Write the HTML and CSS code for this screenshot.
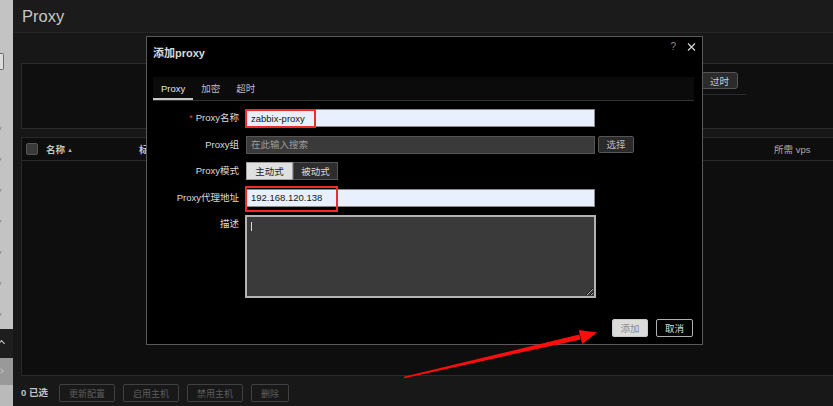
FILE: index.html
```html
<!DOCTYPE html>
<html lang="zh-CN">
<head>
<meta charset="utf-8">
<title>Proxy</title>
<link rel="stylesheet" href="styles.css">
</head>
<body>
<div class="app">
  <aside class="rail">
    <div class="rail-top">
      <span class="rail-field"></span>
      <div class="rail-ticks">
        <span class="tick"></span><span class="tick"></span><span class="tick"></span>
        <span class="tick"></span><span class="tick"></span><span class="tick"></span>
        <span class="tick"></span>
      </div>
    </div>
    <div class="rail-dark"><span class="caret-up"></span></div>
    <div class="rail-mid"><span class="caret-right"></span></div>
    <div class="rail-bottom"></div>
  </aside>

  <main class="page">
    <header class="page-head"><h1>Proxy</h1></header>
    <div class="page-body">
      <section class="filter">
        <div class="filter-tabs"><button class="filter-btn">过时</button></div>
      </section>
      <section class="table">
        <div class="thead">
          <span class="check"></span>
          <span class="th th-name">名称<i class="sort">▲</i></span>
          <span class="th th-tag">标签</span>
          <span class="th th-vps">所需 vps</span>
        </div>
      </section>
    </div>
    <footer class="page-foot">
      <span class="selected">0 已选</span>
      <button class="foot-btn">更新配置</button>
      <button class="foot-btn">启用主机</button>
      <button class="foot-btn">禁用主机</button>
      <button class="foot-btn">删除</button>
    </footer>
  </main>
</div>

<div class="dialog">
  <div class="dlg-head">
    <span class="dlg-title">添加proxy</span>
    <span class="dlg-tools">
      <span class="dlg-help">?</span>
      <svg class="dlg-close" width="9" height="8" viewBox="0 0 9 8"><path d="M1 0.5 L8 7.5 M8 0.5 L1 7.5" stroke="#d0d0d0" stroke-width="1.3" fill="none"/></svg>
    </span>
  </div>
  <nav class="dlg-tabs">
    <span class="tab tab-on">Proxy</span>
    <span class="tab">加密</span>
    <span class="tab">超时</span>
  </nav>
  <div class="dlg-form">
    <div class="row">
      <label class="lbl"><i class="req">*</i>Proxy名称</label>
      <div class="field">
        <input class="txt" value="zabbix-proxy">
        <span class="mark mark-name"></span>
      </div>
    </div>
    <div class="row">
      <label class="lbl">Proxy组</label>
      <div class="field">
        <input class="txt txt-dark" placeholder="在此输入搜索">
        <button class="pick">选择</button>
      </div>
    </div>
    <div class="row">
      <label class="lbl">Proxy模式</label>
      <div class="seg">
        <button class="seg-btn seg-on">主动式</button>
        <button class="seg-btn">被动式</button>
      </div>
    </div>
    <div class="row">
      <label class="lbl">Proxy代理地址</label>
      <div class="field">
        <input class="txt" value="192.168.120.138">
        <span class="mark mark-addr"></span>
      </div>
    </div>
    <div class="row row-memo">
      <label class="lbl">描述</label>
      <div class="field">
        <textarea class="memo"></textarea>
        <span class="text-caret"></span>
      </div>
    </div>
  </div>
  <div class="dlg-actions">
    <button class="btn-add">添加</button>
    <button class="btn-cancel">取消</button>
  </div>
</div>

<svg class="pointer" width="833" height="406" viewBox="0 0 833 406">
  <polygon points="404.2,378.2 403.8,376.8 579.4,334.6 580.6,339.4" fill="#ff0d0d"/>
  <polygon points="597,332.6 578.8,330 582.2,344" fill="#ff0d0d"/>
</svg>
</body>
</html>
```

FILE: styles.css
```css
body {
  margin: 0;
  width: 833px;
  height: 406px;
  overflow: hidden;
  position: relative;
  background: #171717;
  font-family: "Liberation Sans", "Noto Sans CJK SC", sans-serif;
  font-size: 9.5px;
  color: #ccc;
}

button, input, textarea {
  font-family: inherit;
  font-size: 9.5px;
  margin: 0;
  padding: 0;
  outline: none;
}

.app {
  display: flex;
  height: 406px;
}

/* side rail */
.rail {
  width: 13px;
  flex: none;
  display: flex;
  flex-direction: column;
}
.rail-top {
  height: 329px;
  background: #c3c3c3;
  padding-top: 53px;
  box-sizing: border-box;
}
.rail-field {
  display: block;
  width: 4px;
  height: 17px;
  box-sizing: border-box;
  border: 1px solid #6d6d6d;
  border-left: none;
  border-radius: 0 2px 2px 0;
  background: #dcdcdc;
}
.rail-ticks {
  margin-top: 56px;
  display: flex;
  flex-direction: column;
  gap: 27px;
}
.tick {
  display: block;
  width: 4px;
  height: 4px;
  margin-left: -3px;
  box-sizing: border-box;
  border-right: 1px solid #8a8a8a;
  border-bottom: 1px solid #8a8a8a;
  transform: rotate(30deg);
}
.rail-dark {
  height: 29px;
  background: #1e1e1e;
  padding-top: 12px;
  box-sizing: border-box;
}
.caret-up {
  display: block;
  width: 4px;
  height: 4px;
  margin-left: -1px;
  border-left: 1px solid #cfcfcf;
  border-top: 1px solid #cfcfcf;
  transform: rotate(45deg);
}
.rail-mid {
  height: 27px;
  background: #999;
  padding-top: 11px;
  box-sizing: border-box;
}
.caret-right {
  display: block;
  width: 3px;
  height: 3px;
  margin-left: -1px;
  border-right: 1px solid #bcbcbc;
  border-top: 1px solid #bcbcbc;
  transform: rotate(45deg);
}
.rail-bottom {
  flex: 1;
  background: #bababa;
}

/* page */
.page {
  flex: 1;
  min-width: 0;
  display: flex;
  flex-direction: column;
}
.page-head {
  height: 33px;
  box-sizing: border-box;
  background: #1b1b1b;
  border-bottom: 1px solid #262626;
  padding-left: 9px;
  display: flex;
  align-items: center;
}
.page-head h1 {
  margin: 0;
  font-size: 16.5px;
  font-weight: normal;
  color: #c6c6c6;
}
.page-body {
  flex: 1;
  display: flex;
  flex-direction: column;
  padding: 30px 0 0 8px;
  margin-right: -6px;
  background: #171717;
}
.filter {
  height: 66px;
  box-sizing: border-box;
  border: 1px solid #2b2b2b;
  background: #0f0f0f;
}
.filter-tabs {
  width: 254px;
  margin-left: 470px;
  height: 31px;
  box-sizing: border-box;
  border-bottom: 1px solid #2a2a2a;
  display: flex;
  justify-content: flex-end;
  align-items: flex-start;
  padding: 8px 8px 0 0;
}
.filter-btn {
  height: 17px;
  padding: 0 8px;
  background: #2b2b2b;
  border: 1px solid #555;
  border-radius: 3px;
  color: #cfcfcf;
}
.table {
  flex: 1;
  margin-top: 8px;
  border: 1px solid #2a2a2a;
  background: #0e0e0e;
}
.thead {
  height: 23px;
  box-sizing: border-box;
  border-bottom: 1px solid #2a2a2a;
  display: flex;
  align-items: center;
  padding-left: 4px;
}
.check {
  width: 12px;
  height: 12px;
  box-sizing: border-box;
  border: 1px solid #555;
  border-radius: 2px;
  background: #3a3a3a;
  margin-right: 8px;
}
.th {
  color: #c4c4c4;
  font-weight: bold;
}
.th-name {
  width: 93px;
}
.sort {
  font-style: normal;
  font-size: 6px;
  color: #aaa;
  margin-left: 2px;
  vertical-align: 1px;
}
.th-tag {
  flex: 1;
}
.th-vps {
  width: 64px;
  font-weight: normal;
  color: #aaa;
}
.page-foot {
  height: 30px;
  box-sizing: border-box;
  background: #181818;
  display: flex;
  align-items: flex-start;
  gap: 8px;
  padding: 8px 0 0 8px;
}
.selected {
  line-height: 18px;
  color: #c4c4c4;
  font-weight: bold;
  margin-right: 3px;
}
.foot-btn {
  height: 18px;
  padding: 0 9px;
  font-size: 9px;
  background: transparent;
  border: 1px solid #404040;
  border-radius: 2px;
  color: #5e5e5e;
}

/* dialog */
.dialog {
  position: absolute;
  left: 146px;
  top: 36px;
  width: 557px;
  height: 309px;
  box-sizing: border-box;
  border: 1px solid #5a5a5a;
  background: #000;
  padding: 0 8px 0 6px;
  display: flex;
  flex-direction: column;
}
.dlg-head {
  height: 30px;
  display: flex;
  align-items: center;
}
.dlg-title {
  font-size: 11px;
  font-weight: bold;
  color: #dadada;
}
.dlg-tools {
  margin-left: auto;
  margin-right: -2px;
  align-self: flex-start;
  margin-top: 5px;
  display: flex;
  align-items: center;
  gap: 11px;
}
.dlg-help {
  font-size: 10px;
  color: #8a8a8a;
  line-height: 9px;
}
.dlg-close {
  display: block;
}
.dlg-tabs {
  margin-top: 10px;
  height: 24px;
  box-sizing: border-box;
  background: #0b0b0b;
  border-bottom: 1px solid #333;
  display: flex;
}
.tab {
  padding: 0 8px;
  line-height: 23px;
  height: 23px;
  color: #bdbdbd;
}
.tab-on {
  color: #e0e0e0;
  box-shadow: inset 0 -2px 0 #c8c8c8;
}
.dlg-form {
  margin-top: 8px;
  display: flex;
  flex-direction: column;
  gap: 8.5px;
}
.row {
  display: flex;
  align-items: flex-start;
}
.lbl {
  width: 86px;
  flex: none;
  margin-right: 7px;
  text-align: right;
  line-height: 18px;
  color: #dedede;
}
.req {
  font-style: normal;
  color: #e53935;
  margin-right: 3px;
}
.field {
  position: relative;
  display: flex;
}
.txt {
  width: 349px;
  height: 18px;
  box-sizing: border-box;
  border: 1px solid #8b8b8b;
  background: #e8f0fe;
  color: #151515;
  padding: 0 4px;
}
.txt-dark {
  background: #3a3a3a;
  border-color: #555;
  color: #ddd;
}
.txt-dark::placeholder {
  color: #9b9b9b;
}
.pick {
  margin-left: 3px;
  width: 36px;
  height: 17px;
  background: #2a2a2a;
  border: 1px solid #555;
  border-radius: 2px;
  color: #bdbdbd;
}
.seg {
  display: flex;
}
.seg-btn {
  height: 18px;
  width: 45px;
  box-sizing: border-box;
  background: #2d2d2d;
  border: 1px solid #555;
  color: #dcdcdc;
}
.seg-on {
  width: 47px;
  background: #e0e0e0;
  border-color: #a0a0a0;
  color: #222;
}
.memo {
  display: block;
  width: 351px;
  height: 83px;
  margin-left: -1px;
  box-sizing: border-box;
  border: 2px solid #b3b3b3;
  background: #3a3a3a;
  color: #ddd;
  padding: 3px 4px;
  resize: both;
}
.text-caret {
  position: absolute;
  left: 5px;
  top: 7px;
  width: 1px;
  height: 9px;
  background: #d8d8d8;
}
.mark {
  position: absolute;
  box-sizing: border-box;
  border: 2px solid #ee2b2f;
  pointer-events: none;
}
.mark-name {
  left: -1px;
  top: 0;
  width: 71px;
  height: 19px;
}
.mark-addr {
  left: -1px;
  top: -3px;
  width: 93px;
  height: 26px;
}
.dlg-actions {
  margin-top: auto;
  padding-bottom: 7px;
  margin-right: 1px;
  display: flex;
  justify-content: flex-end;
  gap: 8px;
}
.btn-add {
  width: 36px;
  height: 18px;
  background: #dcdcdc;
  border: 1px solid #c9c9c9;
  border-radius: 2px;
  color: #8a8a8a;
}
.btn-cancel {
  width: 37px;
  height: 18px;
  background: #000;
  border: 1px solid #b0b0b0;
  border-radius: 2px;
  color: #dedede;
}

/* callout arrow drawn over the page */
.pointer {
  position: absolute;
  left: 0;
  top: 0;
  pointer-events: none;
}
```
